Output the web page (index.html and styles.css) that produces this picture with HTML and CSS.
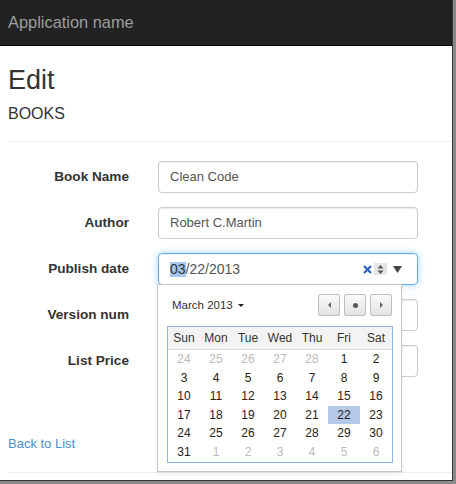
FILE: index.html
```html
<!DOCTYPE html>
<html lang="en">
<head>
<meta charset="utf-8">
<title>Edit - Books</title>
<link rel="stylesheet" href="styles.css">
</head>
<body>
<div class="window">
  <header class="navbar"><span class="brand">Application name</span></header>
  <main class="container">
    <h2 class="title">Edit</h2>
    <h4 class="subtitle">BOOKS</h4>
    <hr class="rule">
    <form class="form">
      <div class="row"><label class="label">Book Name</label><div class="input">Clean Code</div></div>
      <div class="row"><label class="label">Author</label><div class="input">Robert C.Martin</div></div>
      <div class="row"><label class="label">Publish date</label>
        <div class="field">
          <div class="input date focus">
            <span class="sel">03</span><span>/22/2013</span>
            <span class="tools">
              <svg class="clear" width="9" height="9" viewBox="0 0 9 9"><path d="M1 1L8 8M8 1L1 8" stroke="#2f62bd" stroke-width="2.2" fill="none"/></svg>
              <span class="spin"><svg width="7" height="11" viewBox="0 0 7 11"><path d="M3.5 1L6.5 4.5H0.5Z M3.5 10L6.5 6.5H0.5Z" fill="#555"/></svg></span>
              <svg class="drop" width="9" height="7" viewBox="0 0 9 7"><path d="M0 0H9L4.5 7Z" fill="#444"/></svg>
            </span>
          </div>
          <div class="picker">
            <div class="pk-head">
              <span class="month">March 2013 <span class="caret"></span></span>
              <span class="nav">
                <span class="btn"><span class="tri-l"></span></span>
                <span class="btn"><span class="dot"></span></span>
                <span class="btn"><span class="tri-r"></span></span>
              </span>
            </div>
            <div class="cal">
              <div class="cal-head"><span>Sun</span><span>Mon</span><span>Tue</span><span>Wed</span><span>Thu</span><span>Fri</span><span>Sat</span></div>
              <div class="cal-days">
                <span class="other">24</span><span class="other">25</span><span class="other">26</span><span class="other">27</span><span class="other">28</span><span>1</span><span>2</span>
                <span>3</span><span>4</span><span>5</span><span>6</span><span>7</span><span>8</span><span>9</span>
                <span>10</span><span>11</span><span>12</span><span>13</span><span>14</span><span>15</span><span>16</span>
                <span>17</span><span>18</span><span>19</span><span>20</span><span>21</span><span class="selected">22</span><span>23</span>
                <span>24</span><span>25</span><span>26</span><span>27</span><span>28</span><span>29</span><span>30</span>
                <span>31</span><span class="other">1</span><span class="other">2</span><span class="other">3</span><span class="other">4</span><span class="other">5</span><span class="other">6</span>
              </div>
            </div>
          </div>
        </div>
      </div>
      <div class="row"><label class="label">Version num</label><div class="input"></div></div>
      <div class="row"><label class="label">List Price</label><div class="input"></div></div>
    </form>
    <a class="back" href="#">Back to List</a>
    <hr class="rule bottom">
  </main>
</div>
</body>
</html>
```

FILE: styles.css
```css
html, body {
  margin: 0;
  padding: 0;
}
body {
  background: #8a8a8a;
  font-family: "Liberation Sans", Arial, sans-serif;
  color: #333;
  width: 456px;
  height: 484px;
  overflow: hidden;
}
.window {
  width: 452px;
  height: 480px;
  background: #fff;
  border-right: 1px solid #333;
  border-bottom: 1px solid #333;
  overflow: hidden;
}
.navbar {
  height: 45px;
  background: #222;
  border-bottom: 1px solid #080808;
}
.brand {
  display: block;
  padding-left: 8px;
  font-size: 16.4px;
  line-height: 45px;
  color: #9d9d9d;
}
.container {
  padding-left: 8px;
}
.title {
  margin: 19px 0 0;
  font-size: 27px;
  line-height: 30px;
  font-weight: normal;
  color: #333;
}
.subtitle {
  margin: 10px 0 0;
  font-size: 16px;
  line-height: 18px;
  font-weight: normal;
  color: #333;
}
.rule {
  margin: 18px 0 0;
  height: 0;
  border: 0;
  border-top: 1px solid #eee;
}
.form {
  margin-top: 19px;
  display: flex;
  flex-direction: column;
  gap: 14px;
}
.row {
  display: grid;
  grid-template-columns: 121px 260px;
  column-gap: 29px;
  height: 32px;
}
.label {
  font-size: 13.6px;
  font-weight: bold;
  text-align: right;
  line-height: 32px;
  color: #333;
}
.input {
  box-sizing: border-box;
  height: 32px;
  border: 1px solid #ccc;
  border-radius: 4px;
  padding: 0 11px;
  font-size: 13px;
  line-height: 30px;
  color: #555;
  background: #fff;
  box-shadow: inset 0 1px 1px rgba(0, 0, 0, 0.075);
}
.field {
  position: relative;
  z-index: 2;
}
.date {
  display: flex;
  align-items: center;
  font-size: 14px;
  padding-right: 15px;
}
.focus {
  border-color: #66afe9;
  box-shadow: inset 0 1px 1px rgba(0, 0, 0, 0.075), 0 0 7px rgba(102, 175, 233, 0.6);
}
.sel {
  background: #a6c6ee;
  color: #333;
  line-height: 15px;
}
.tools {
  margin-left: auto;
  display: flex;
  align-items: center;
}
.clear {
  margin-right: 2px;
}
.spin {
  display: flex;
  align-items: center;
  justify-content: center;
  width: 13px;
  height: 12px;
  background: #e6e6e6;
  margin-right: 6px;
}
.picker {
  position: absolute;
  top: 31px;
  left: -1px;
  width: 245px;
  box-sizing: border-box;
  background: #fff;
  border: 1px solid #c8c8c8;
  box-shadow: 0 2px 4px rgba(0, 0, 0, 0.08);
  padding: 9px 8px 8px 9px;
}
.pk-head {
  display: flex;
  justify-content: space-between;
  align-items: center;
  height: 22px;
  padding-left: 5px;
  padding-right: 1px;
}
.month {
  font-size: 11.5px;
  color: #333;
  display: flex;
  align-items: center;
}
.caret {
  display: inline-block;
  margin-left: 5px;
  width: 0;
  height: 0;
  border-left: 3px solid transparent;
  border-right: 3px solid transparent;
  border-top: 3px solid #222;
}
.nav {
  display: flex;
  gap: 4px;
}
.btn {
  box-sizing: border-box;
  width: 22px;
  height: 22px;
  border: 1px solid #bdbdbd;
  border-radius: 2px;
  background: linear-gradient(#fbfbfb, #e2e2e2);
  display: flex;
  align-items: center;
  justify-content: center;
}
.tri-l {
  width: 0;
  height: 0;
  border-top: 3px solid transparent;
  border-bottom: 3px solid transparent;
  border-right: 3px solid #666;
}
.tri-r {
  width: 0;
  height: 0;
  border-top: 3px solid transparent;
  border-bottom: 3px solid transparent;
  border-left: 3px solid #666;
}
.dot {
  width: 5px;
  height: 5px;
  border-radius: 50%;
  background: #555;
}
.cal {
  margin-top: 10px;
  width: 224px;
  border: 1px solid #8db3e6;
}
.cal-head {
  display: grid;
  grid-template-columns: repeat(7, 32px);
  height: 22px;
  line-height: 22px;
  background: #f3f3f3;
  border-bottom: 1px solid #dcdcdc;
  font-size: 12px;
  text-align: center;
  color: #333;
}
.cal-days {
  display: grid;
  grid-template-columns: repeat(7, 32px);
  grid-auto-rows: 18.5px;
  padding-bottom: 1px;
  font-size: 12px;
  text-align: center;
  color: #222;
}
.cal-days span {
  line-height: 18.5px;
}
.cal-days .other {
  color: #bbb;
}
.cal-days .selected {
  background: #b4c8e8;
}
.back {
  display: block;
  margin-top: 58px;
  font-size: 13px;
  line-height: 18px;
  color: #4a90cf;
  text-decoration: none;
}
.bottom {
  margin-top: 19px;
}
```
